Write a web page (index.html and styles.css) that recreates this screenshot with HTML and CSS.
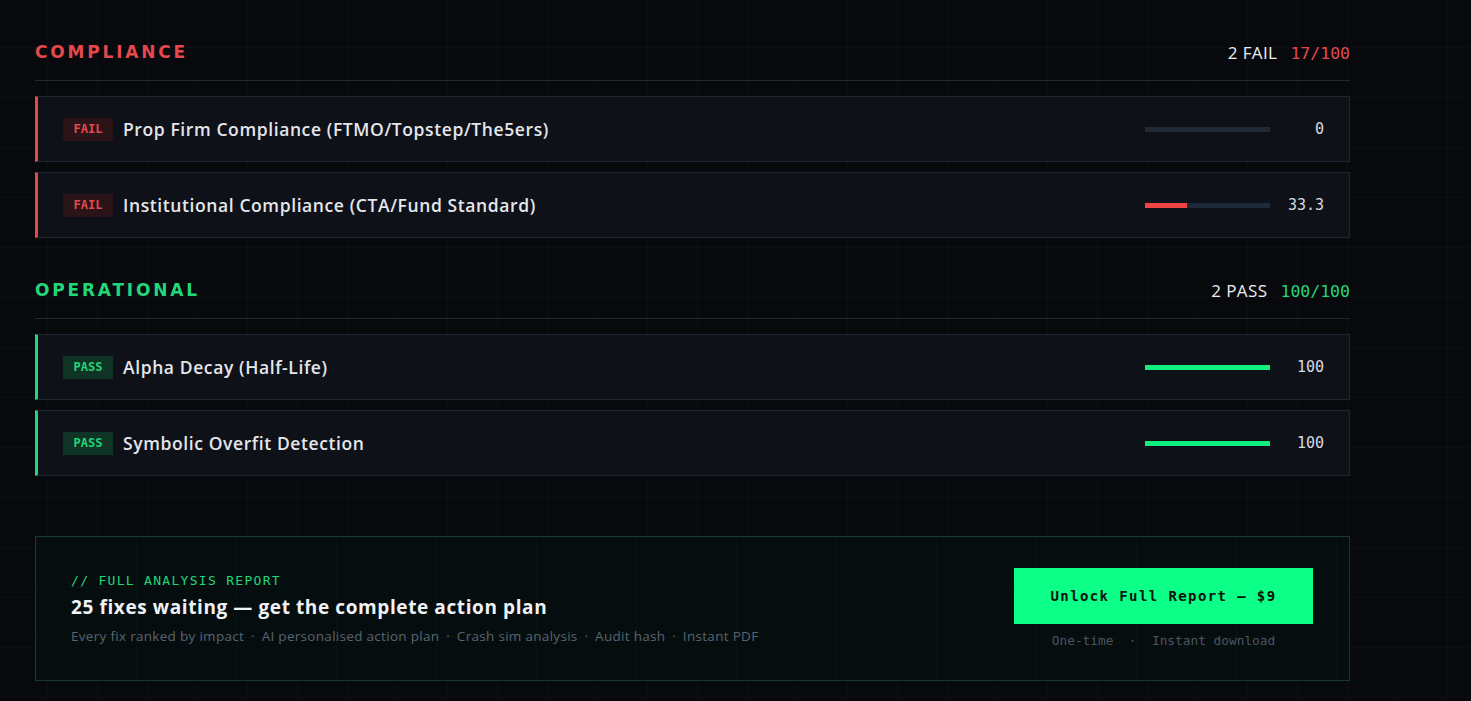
FILE: index.html
```html
<!DOCTYPE html>
<html lang="en">
<head>
<meta charset="utf-8">
<title>Audit Results</title>
<link rel="stylesheet" href="styles.css">
</head>
<body>
<main class="page">
  <section class="group">
    <header class="group-head">
      <h2 class="group-title fail-c">COMPLIANCE</h2>
      <div class="group-meta"><span class="meta-count">2 FAIL</span><span class="meta-score fail-c">17/100</span></div>
    </header>
    <div class="rows">
      <div class="row row-fail">
        <span class="badge badge-fail">FAIL</span>
        <span class="row-title">Prop Firm Compliance (FTMO/Topstep/The5ers)</span>
        <div class="bar"><div class="bar-fill fill-fail" style="width:0%"></div></div>
        <span class="score">0</span>
      </div>
      <div class="row row-fail">
        <span class="badge badge-fail">FAIL</span>
        <span class="row-title">Institutional Compliance (CTA/Fund Standard)</span>
        <div class="bar"><div class="bar-fill fill-fail" style="width:33.3%"></div></div>
        <span class="score">33.3</span>
      </div>
    </div>
  </section>

  <section class="group">
    <header class="group-head">
      <h2 class="group-title pass-c">OPERATIONAL</h2>
      <div class="group-meta"><span class="meta-count">2 PASS</span><span class="meta-score pass-c">100/100</span></div>
    </header>
    <div class="rows">
      <div class="row row-pass">
        <span class="badge badge-pass">PASS</span>
        <span class="row-title">Alpha Decay (Half-Life)</span>
        <div class="bar"><div class="bar-fill fill-pass" style="width:100%"></div></div>
        <span class="score">100</span>
      </div>
      <div class="row row-pass">
        <span class="badge badge-pass">PASS</span>
        <span class="row-title">Symbolic Overfit Detection</span>
        <div class="bar"><div class="bar-fill fill-pass" style="width:100%"></div></div>
        <span class="score">100</span>
      </div>
    </div>
  </section>

  <section class="cta">
    <div class="cta-text">
      <div class="cta-label">// FULL ANALYSIS REPORT</div>
      <div class="cta-title">25 fixes waiting — get the complete action plan</div>
      <div class="cta-sub">Every fix ranked by impact <span class="dot">·</span> AI personalised action plan <span class="dot">·</span> Crash sim analysis <span class="dot">·</span> Audit hash <span class="dot">·</span> Instant PDF</div>
    </div>
    <div class="cta-action">
      <button class="cta-btn">Unlock Full Report — $9</button>
      <div class="cta-note">One-time &nbsp;·&nbsp; Instant download</div>
    </div>
  </section>
</main>
</body>
</html>
```

FILE: styles.css
```css
* { box-sizing: border-box; }
html, body { margin: 0; padding: 0; }
body {
  background-color: #08090d;
  background-image:
    linear-gradient(rgba(255,255,255,0.018) 1px, transparent 1px),
    linear-gradient(90deg, rgba(255,255,255,0.018) 1px, transparent 1px);
  background-size: 50px 50px;
  background-position: -3px -3px;
  color: #e8eaee;
  font-family: "Open Sans", "Noto Sans", sans-serif;
  min-height: 701px;
}
.page {
  width: 1315px;
  margin-left: 35px;
  padding-top: 38px;
}
.fail-c { color: #e5484d; }
.pass-c { color: #22d67a; }

.group { margin-bottom: 38px; }
.group-head {
  display: flex;
  align-items: center;
  justify-content: space-between;
  height: 28px;
}
.group-title {
  margin: 0;
  font-family: "DejaVu Sans", sans-serif;
  font-size: 17px;
  font-weight: 600;
  letter-spacing: 2.8px;
}
.group-meta { display: flex; align-items: baseline; gap: 13px; }
.meta-count { font-size: 17px; font-weight: 500; letter-spacing: 0.4px; color: #eceef2; }
.meta-score { font-family: "DejaVu Sans Mono", monospace; font-size: 16.5px; }

.rows {
  border-top: 1px solid #1f2731;
  margin-top: 14px;
  padding-top: 15px;
  display: flex;
  flex-direction: column;
  gap: 10px;
}
.row {
  display: flex;
  align-items: center;
  height: 66px;
  background: #0e1118;
  border: 1px solid #1e2632;
  border-left: 3px solid;
  padding: 0 25px 0 25px;
}
.row-fail { border-left-color: #e5484d; }
.row-pass { border-left-color: #22d67a; }
.badge {
  font-family: "DejaVu Sans Mono", monospace;
  font-weight: 700;
  font-size: 12px;
  width: 50px;
  height: 23px;
  display: flex;
  align-items: center;
  justify-content: center;
  margin-right: 10px;
}
.badge-fail { background: #2a1417; color: #e5484d; }
.badge-pass { background: #0f3325; color: #22d67a; }
.row-title {
  flex: 1;
  font-size: 17.5px;
  font-weight: 600;
  letter-spacing: 0.6px;
  color: #e4e6eb;
}
.bar {
  width: 125px;
  height: 5px;
  background: #1f2a38;
  margin-right: 14px;
}
.bar-fill { height: 100%; }
.fill-fail { background: #ef4444; }
.fill-pass { background: #10f07f; }
.score {
  width: 40px;
  text-align: right;
  font-family: "DejaVu Sans Mono", monospace;
  font-size: 15px;
  color: #d8dbe0;
}

.cta {
  margin-top: 60px;
  height: 145px;
  border: 1px solid #143a2a;
  background-color: #060d0f;
  background-image:
    linear-gradient(rgba(30,255,140,0.025) 1px, transparent 1px),
    linear-gradient(90deg, rgba(30,255,140,0.025) 1px, transparent 1px);
  background-size: 50px 50px;
  display: flex;
  align-items: center;
  justify-content: space-between;
  padding: 0 36px 0 35px;
}
.cta-label {
  font-family: "DejaVu Sans Mono", monospace;
  font-size: 13px;
  letter-spacing: 1.3px;
  color: #22d67a;
}
.cta-title {
  margin-top: 6px;
  font-size: 19px;
  font-weight: 700;
  letter-spacing: 0.6px;
  color: #f0f2f5;
}
.cta-sub {
  margin-top: 7px;
  font-size: 13.5px;
  letter-spacing: 0.3px;
  color: #5a6470;
}
.cta-sub .dot { margin: 0 3px; }
.cta-action {
  display: flex;
  flex-direction: column;
  align-items: center;
  margin-top: -2px;
}
.cta-btn {
  width: 299px;
  height: 56px;
  border: none;
  background: #0cff86;
  color: #06140d;
  font-family: "DejaVu Sans Mono", monospace;
  font-weight: 700;
  font-size: 14px;
  letter-spacing: 1.4px;
}
.cta-note {
  margin-top: 9px;
  font-family: "DejaVu Sans Mono", monospace;
  font-size: 12.8px;
  color: #4b5560;
}
```
